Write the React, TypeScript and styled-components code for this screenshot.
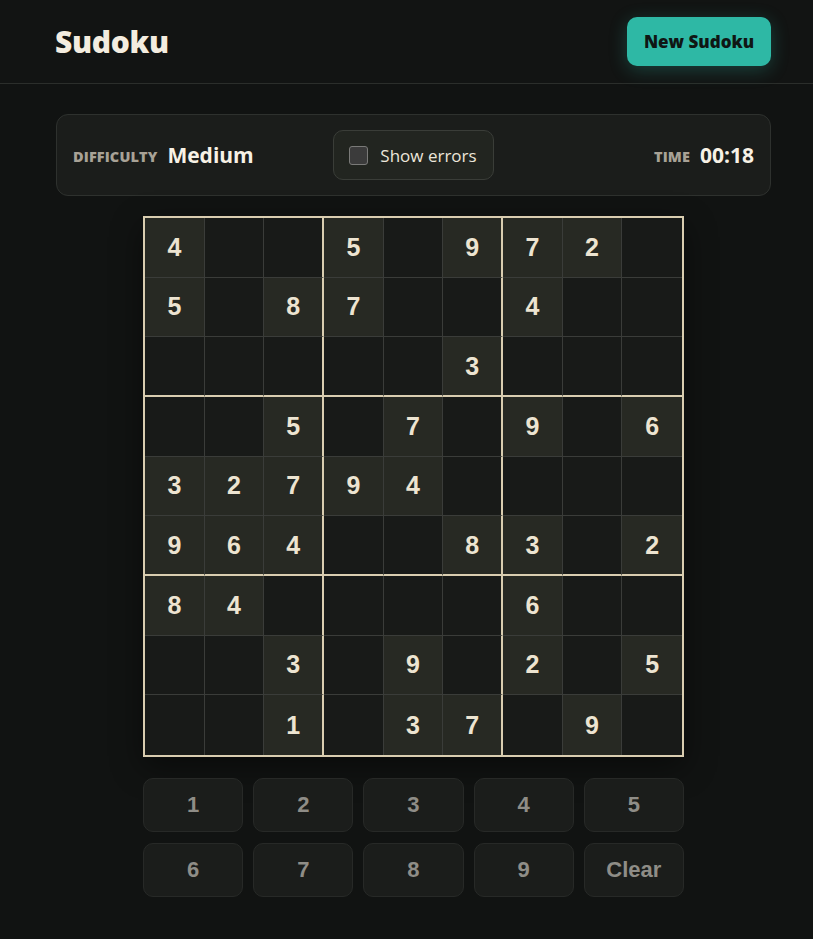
import React from 'react'
import styled, { createGlobalStyle } from 'styled-components'

const uiFont = `"Open Sans", "Noto Sans", sans-serif`
const digitFont = `"Liberation Sans", Arial, sans-serif`

const puzzle = [
    '4..5.972.',
    '5.87..4..',
    '.....3...',
    '..5.7.9.6',
    '32794....',
    '964..83.2',
    '84....6..',
    '..3.9.2.5',
    '..1.37.9.',
]

export default function App() {
    return (
        <>
            <GlobalStyle />
            <Page>
                <Header>
                    <Title>Sudoku</Title>
                    <NewButton>New Sudoku</NewButton>
                </Header>
                <Main>
                    <InfoBar>
                        <Stat>
                            <StatLabel>Difficulty</StatLabel>
                            <StatValue>Medium</StatValue>
                        </Stat>
                        <Toggle>
                            <CheckBox />
                            <span>Show errors</span>
                        </Toggle>
                        <Stat $end>
                            <StatLabel>Time</StatLabel>
                            <StatValue>00:18</StatValue>
                        </Stat>
                    </InfoBar>

                    <Board>
                        {puzzle.map((row, r) =>
                            row.split('').map((ch, c) => (
                                <Cell key={`${r}-${c}`} $given={ch !== '.'} $col={c} $row={r}>
                                    {ch !== '.' ? ch : ''}
                                </Cell>
                            ))
                        )}
                    </Board>

                    <Pad>
                        {['1', '2', '3', '4', '5', '6', '7', '8', '9'].map((n) => (
                            <PadButton key={n}>{n}</PadButton>
                        ))}
                        <PadButton>Clear</PadButton>
                    </Pad>
                </Main>
            </Page>
        </>
    )
}

const GlobalStyle = createGlobalStyle`
    html, body {
        margin: 0;
        background: #111312;
    }
    * {
        box-sizing: border-box;
    }
`
const Page = styled.div`
    min-height: 939px;
    background: #111312;
    font-family: ${uiFont};
`
const Header = styled.header`
    height: 84px;
    display: flex;
    align-items: center;
    justify-content: space-between;
    padding: 0 42px 0 55px;
    border-bottom: 1px solid #2b2e2b;
    background: #121413;
`
const Title = styled.h1`
    margin: 0;
    font-size: 30px;
    font-weight: 800;
    color: #f3ecdf;
    letter-spacing: -0.3px;
`
const NewButton = styled.button`
    width: 144px;
    height: 49px;
    border: none;
    border-radius: 10px;
    background: #2eb8a5;
    color: #0f1614;
    font-family: ${uiFont};
    font-weight: 800;
    font-size: 17px;
    box-shadow: 0 4px 18px rgba(46, 184, 165, 0.28);
`
const Main = styled.main`
    padding: 30px 42px 0 56px;
    display: flex;
    flex-direction: column;
    align-items: center;
`
const InfoBar = styled.div`
    width: 100%;
    height: 82px;
    display: grid;
    grid-template-columns: 1fr auto 1fr;
    align-items: center;
    padding: 0 16px;
    background: #1b1d1b;
    border: 1px solid #2e312e;
    border-radius: 12px;
`
const Stat = styled.div<{ $end?: boolean }>`
    display: flex;
    align-items: center;
    gap: 10px;
    justify-self: ${(p) => (p.$end ? 'end' : 'start')};
`
const StatLabel = styled.span`
    font-size: 14.5px;
    font-weight: 800;
    text-transform: uppercase;
    color: #a8a296;
    letter-spacing: 0.1px;
    padding-top: 2px;
`
const StatValue = styled.span`
    font-size: 21px;
    font-weight: 700;
    color: #f7f1e6;
`
const Toggle = styled.label`
    height: 50px;
    display: flex;
    align-items: center;
    gap: 12px;
    padding: 0 16px 0 15px;
    background: #222520;
    border: 1px solid #3a3d38;
    border-radius: 10px;
    color: #ece6da;
    font-size: 17px;
`
const CheckBox = styled.span`
    width: 19px;
    height: 19px;
    border: 1px solid #7a7a78;
    border-radius: 3px;
    background: #3b3b3b;
`
const Board = styled.div`
    margin-top: 20px;
    width: 541px;
    height: 541px;
    display: grid;
    grid-template-columns: repeat(9, 1fr);
    grid-template-rows: repeat(9, 1fr);
    border: 2px solid #d9cdb0;
    box-shadow: 0 10px 30px rgba(0, 0, 0, 0.45);
`
const Cell = styled.div<{ $given: boolean; $col: number; $row: number }>`
    display: flex;
    align-items: center;
    justify-content: center;
    background: ${(p) => (p.$given ? '#272923' : '#181a18')};
    color: #ede4d1;
    font-family: ${digitFont};
    font-weight: 700;
    font-size: 25px;
    border-right: ${(p) =>
        p.$col === 8 ? 'none' : p.$col % 3 === 2 ? '2px solid #d9cdb0' : '1px solid #3a3c39'};
    border-bottom: ${(p) =>
        p.$row === 8 ? 'none' : p.$row % 3 === 2 ? '2px solid #d9cdb0' : '1px solid #3a3c39'};
`
const Pad = styled.div`
    margin-top: 21px;
    width: 541px;
    display: grid;
    grid-template-columns: repeat(5, 1fr);
    column-gap: 10px;
    row-gap: 11px;
`
const PadButton = styled.button`
    height: 54px;
    border: 1px solid #272927;
    border-radius: 10px;
    background: #1b1d1b;
    color: #8f8d87;
    font-family: ${digitFont};
    font-weight: 700;
    font-size: 22px;
`
